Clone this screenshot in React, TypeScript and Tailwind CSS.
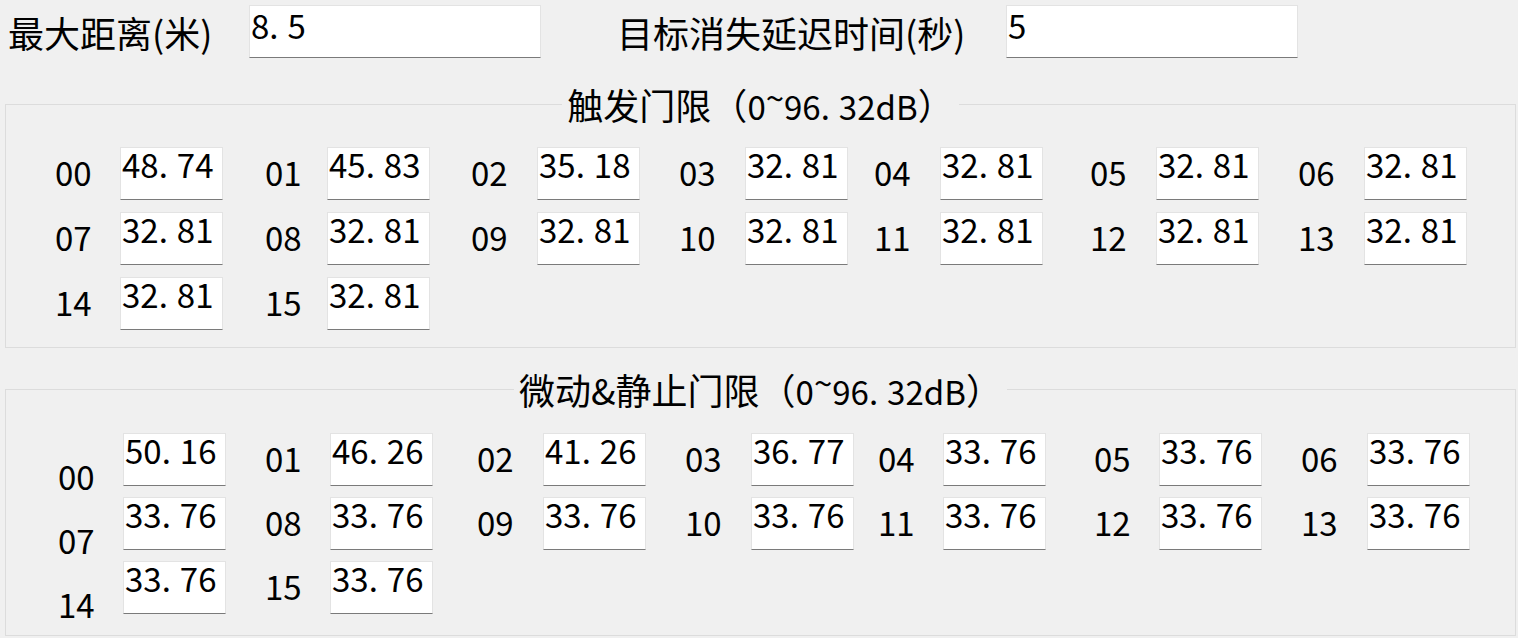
import React from "react";

// 数值里的小数点按半角字宽显示（原界面字体的效果）
const Num = ({ v }: { v: string }) => {
  const [a, b] = v.split(".");
  if (b === undefined) return <>{a}</>;
  return (
    <>
      {a}
      <span className="mr-[9px]">.</span>
      {b}
    </>
  );
};

const Box = ({ value, className = "" }: { value: string; className?: string }) => (
  <div
    className={
      "h-[53px] bg-white border border-[#e3e3e3] border-b-[#7a7a7a] pl-[1px] text-[33px] leading-none whitespace-nowrap " +
      className
    }
  >
    <Num v={value} />
  </div>
);

const trigger = ["48.74", "45.83", "35.18", "32.81", "32.81", "32.81", "32.81", "32.81", "32.81", "32.81", "32.81", "32.81", "32.81", "32.81", "32.81", "32.81"];
const still = ["50.16", "46.26", "41.26", "36.77", "33.76", "33.76", "33.76", "33.76", "33.76", "33.76", "33.76", "33.76", "33.76", "33.76", "33.76", "33.76"];

const labelW1 = ["w-[65px]", "w-[62px]", "w-[66px]", "w-[66px]", "w-[66px]", "w-[66px]", "w-[66px]"];
const labelW2 = ["w-[65px]", "w-[65px]", "w-[66px]", "w-[66px]", "w-[65px]", "w-[65px]", "w-[66px]"];

const Group = ({
  title,
  values,
  second,
}: {
  title: string;
  values: string[];
  second?: boolean;
}) => (
  <fieldset
    className={
      "ml-[5px] w-[1511px] border border-[#dcdcdc] " + (second ? "mt-[23px]" : "mt-[28px]")
    }
  >
    <legend className="mx-auto px-[5px] text-[36px] leading-none whitespace-nowrap">
      {title}（
      <span className="text-[33px]">
        0<span className="relative -top-[9px]">~</span>
        <Num v="96.32dB" />
      </span>
      ）
    </legend>
    <div
      className={
        second
          ? "grid grid-cols-[207px_212px_208px_193px_216px_207px_170px] gap-y-[11px] pl-[52px] pt-[25px] pb-[21px]"
          : "grid grid-cols-[210px_206px_208px_195px_216px_208px_169px] gap-y-[12px] pl-[49px] pt-[24px] pb-[17px]"
      }
    >
      {values.map((v, i) => {
        const col = i % 7;
        const lw = second ? labelW2[col] : labelW1[col];
        const pt = second && col === 0 ? "pt-[27px]" : "pt-[9px]";
        return (
          <div key={i} className="flex items-start h-[53px]">
            <div className={lw + " " + pt + " text-[33px] leading-none"}>
              {String(i).padStart(2, "0")}
            </div>
            <Box value={v} className="w-[103px]" />
          </div>
        );
      })}
    </div>
  </fieldset>
);

export default function App() {
  return (
    <div className="min-h-screen bg-[#f0f0f0] text-black font-['Noto_Sans_CJK_SC',sans-serif] pt-[5px]">
      <div className="flex items-start pl-[8px]">
        <div className="w-[241px] pt-[9px] text-[36px] leading-none whitespace-nowrap">最大距离(米)</div>
        <Box value="8.5" className="w-[292px] pt-[3px]" />
        <div className="ml-[76px] w-[389px] pt-[9px] text-[36px] leading-none whitespace-nowrap">
          目标消失延迟时间(秒)
        </div>
        <Box value="5" className="w-[292px] pt-[3px]" />
      </div>
      <Group title="触发门限" values={trigger} />
      <Group title="微动&静止门限" values={still} second />
    </div>
  );
}
